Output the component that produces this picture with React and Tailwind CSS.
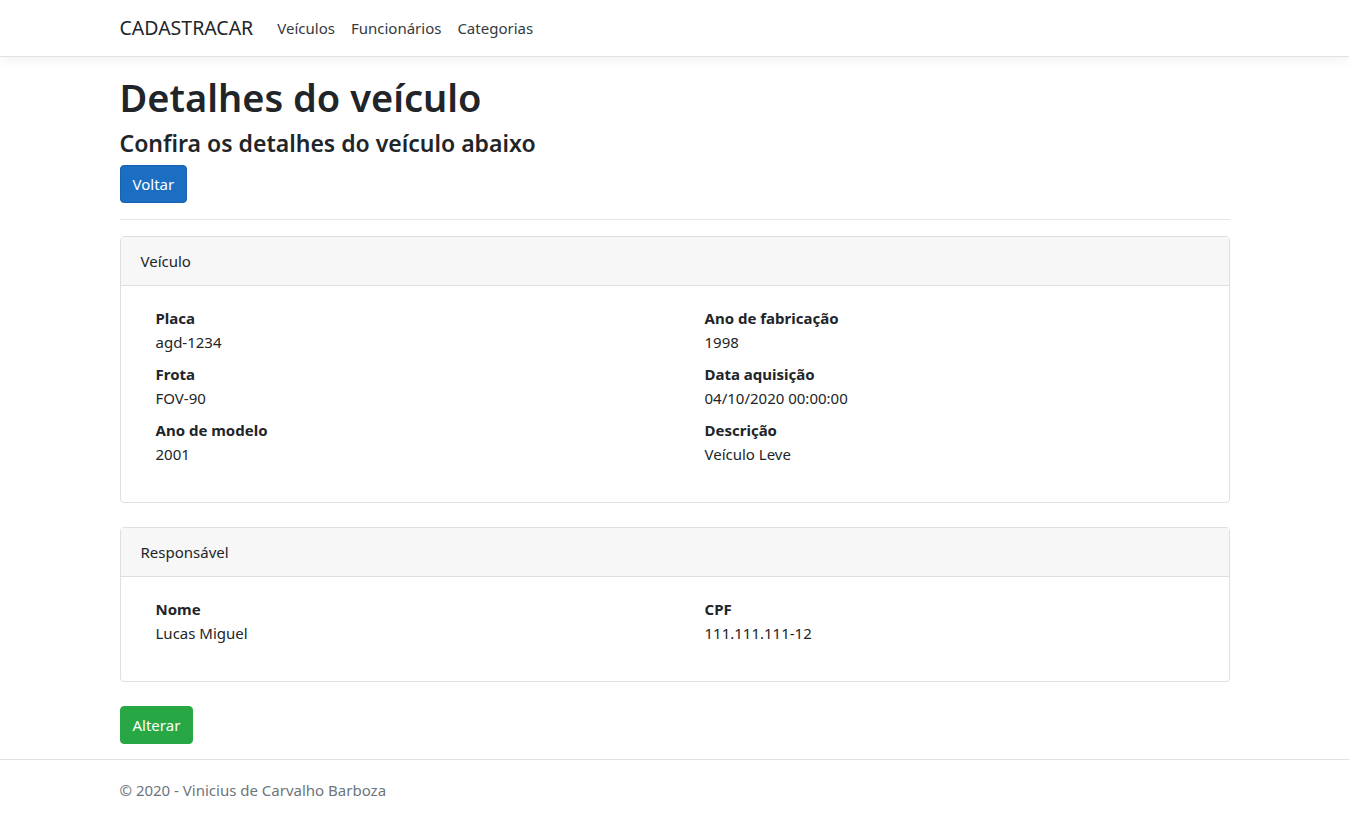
import React from 'react';

const FONT = { fontFamily: '"Segoe UI", "Noto Sans", "Liberation Sans", sans-serif' };

const VEICULO = [
  [
    { label: 'Placa', value: 'agd-1234' },
    { label: 'Frota', value: 'FOV-90' },
    { label: 'Ano de modelo', value: '2001' },
  ],
  [
    { label: 'Ano de fabricação', value: '1998' },
    { label: 'Data aquisição', value: '04/10/2020 00:00:00' },
    { label: 'Descrição', value: 'Veículo Leve' },
  ],
];

const RESPONSAVEL = [
  [{ label: 'Nome', value: 'Lucas Miguel' }],
  [{ label: 'CPF', value: '111.111.111-12' }],
];

function Field({ label, value, last }) {
  return (
    <div>
      <div className="font-bold leading-6">{label}</div>
      <div className={`leading-6 ${last ? 'mb-0' : 'mb-2'}`}>{value}</div>
    </div>
  );
}

function Card({ title, cols }) {
  return (
    <div className="rounded border border-[#dfdfdf] mb-6">
      <div className="bg-[#f7f7f7] border-b border-[#dfdfdf] px-5 py-3 leading-6">{title}</div>
      <div className="p-5">
        <div className="grid grid-cols-[549px_1fr] pl-[15px] mb-4">
          {cols.map((col, i) => (
            <div key={i}>
              {col.map((f, j) => (
                <Field key={f.label} {...f} last={j === col.length - 1} />
              ))}
            </div>
          ))}
        </div>
      </div>
    </div>
  );
}

export default function App() {
  return (
    <div className="min-h-[820px] bg-white text-[#212529] text-[15px]" style={FONT}>
      <header className="border-b border-[#dee2e6] shadow-[0_4px_12px_rgba(0,0,0,0.05)] bg-white mb-4">
        <nav className="w-[1140px] mx-auto px-[15px] py-2 flex items-center">
          <a className="text-[19.5px] leading-[30px] py-[5px] mr-4 text-[#212529]">CADASTRACAR</a>
          <div className="flex">
            <a className="px-2 py-2 leading-6 text-[#343a40]">Veículos</a>
            <a className="px-2 py-2 leading-6 text-[#343a40]">Funcionários</a>
            <a className="px-2 py-2 leading-6 text-[#343a40]">Categorias</a>
          </div>
        </nav>
      </header>

      <main className="w-[1140px] mx-auto px-[15px] pb-[15px]">
        <h1 className="text-[38px] leading-[48px] font-semibold mb-2">Detalhes do veículo</h1>
        <h4 className="text-[23px] leading-[29px] font-semibold mb-[7px]">Confira os detalhes do veículo abaixo</h4>
        <button className="bg-[#1b6ec2] border border-[#1861ac] text-white rounded px-3 py-1.5 leading-6">Voltar</button>
        <hr className="my-4 border-t border-[#e5e5e5]" />
        <Card title="Veículo" cols={VEICULO} />
        <Card title="Responsável" cols={RESPONSAVEL} />
        <button className="bg-[#28a745] border border-[#28a745] text-white rounded px-3 py-1.5 leading-6">Alterar</button>
      </main>

      <footer className="border-t border-[#dee2e6]">
        <div className="w-[1140px] mx-auto px-[15px] leading-[60px] text-[#6c757d]">© 2020 - Vinicius de Carvalho Barboza</div>
      </footer>
    </div>
  );
}
